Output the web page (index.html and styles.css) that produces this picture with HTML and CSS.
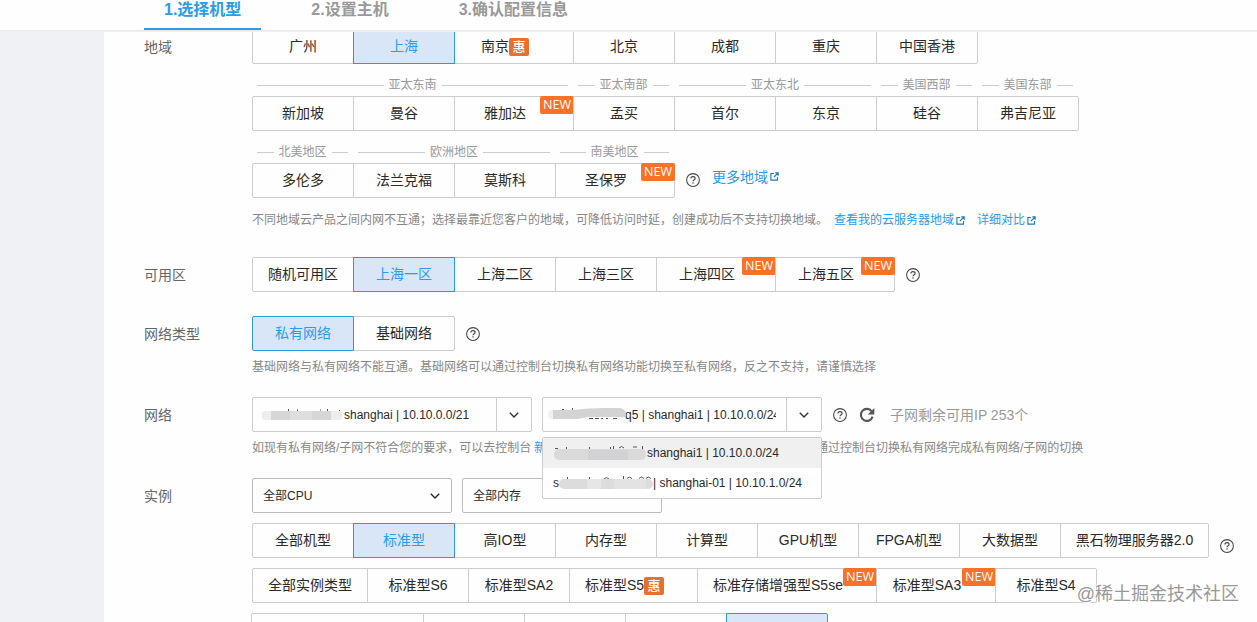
FILE: index.html
```html
<!DOCTYPE html>
<html lang="zh-CN">
<head>
<meta charset="utf-8">
<title>选择机型</title>
<link rel="stylesheet" href="styles.css">
</head>
<body>
<svg class="defs" aria-hidden="true">
  <symbol id="i-help" viewBox="0 0 14 14"><circle cx="7" cy="7" r="6.4" fill="none" stroke="currentColor" stroke-width="1.050"/><path d="M4.900 5.600C4.900 4.300 5.800 3.600 7 3.600s2.100.7 2.100 1.800C9.100 6.700 7 6.800 7 8.300" fill="none" stroke="currentColor" stroke-width="1.150"/><rect x="6.400" y="9.300" width="1.200" height="1.300" fill="currentColor"/></symbol>
  <symbol id="i-ext" viewBox="0 0 9 9"><path d="M4 1.500H.9v6.600h6.600V5M5.300.9h2.900v2.900M8 1L3.900 5.100" fill="none" stroke="currentColor" stroke-width="1.100"/></symbol>
  <symbol id="i-down" viewBox="0 0 10 6"><path d="M.8.8L5 5 9.200.8" fill="none" stroke="currentColor" stroke-width="1.400"/></symbol>
  <symbol id="i-refresh" viewBox="0 0 16 16"><path d="M12.700 4.300A6 6 0 1 0 13.600 9.600" fill="none" stroke="currentColor" stroke-width="2.100"/><path d="M15.300.9v6.500H8.800z" fill="currentColor"/></symbol>
</svg>
<header class="steps">
  <div class="step active">1.选择机型</div>
  <div class="step">2.设置主机</div>
  <div class="step">3.确认配置信息</div>
</header>
<div class="page">
  <aside class="side"></aside>
  <main class="form">
    <section class="field">
      <div class="label">地域</div>
      <div class="body">
        <div class="opts"><div class="opt">广州</div><div class="opt on">上海</div><div class="opt tagged">南京<b class="hui">惠</b></div><div class="opt">北京</div><div class="opt">成都</div><div class="opt">重庆</div><div class="opt">中国香港</div></div>
        <div class="heads"><div class="head span3t">亚太东南</div><div class="head">亚太南部</div><div class="head span2">亚太东北</div><div class="head">美国西部</div><div class="head">美国东部</div></div>
        <div class="opts"><div class="opt">新加坡</div><div class="opt">曼谷</div><div class="opt tagged">雅加达<b class="new">NEW</b></div><div class="opt">孟买</div><div class="opt">首尔</div><div class="opt">东京</div><div class="opt">硅谷</div><div class="opt">弗吉尼亚</div></div>
        <div class="heads"><div class="head">北美地区</div><div class="head span2">欧洲地区</div><div class="head span1t">南美地区</div></div>
        <div class="line">
          <div class="opts"><div class="opt">多伦多</div><div class="opt">法兰克福</div><div class="opt">莫斯科</div><div class="opt tagged">圣保罗<b class="new">NEW</b></div></div>
          <svg class="help up"><use href="#i-help"/></svg>
          <a class="more">更多地域<svg class="ext"><use href="#i-ext"/></svg></a>
        </div>
        <div class="hint far"><span>不同地域云产品之间内网不互通；选择最靠近您客户的地域，可降低访问时延，创建成功后不支持切换地域。</span><a>查看我的云服务器地域<svg class="ext"><use href="#i-ext"/></svg></a><a class="second">详细对比<svg class="ext"><use href="#i-ext"/></svg></a></div>
      </div>
    </section>
    <section class="field zone">
      <div class="label">可用区</div>
      <div class="body line">
        <div class="opts"><div class="opt">随机可用区</div><div class="opt on">上海一区</div><div class="opt">上海二区</div><div class="opt">上海三区</div><div class="opt tagged">上海四区<b class="new">NEW</b></div><div class="opt tagged">上海五区<b class="new">NEW</b></div></div>
        <svg class="help"><use href="#i-help"/></svg>
      </div>
    </section>
    <section class="field nettype">
      <div class="label">网络类型</div>
      <div class="body">
        <div class="line">
          <div class="opts"><div class="opt on">私有网络</div><div class="opt">基础网络</div></div>
          <svg class="help"><use href="#i-help"/></svg>
        </div>
        <div class="hint"><span>基础网络与私有网络不能互通。基础网络可以通过控制台切换私有网络功能切换至私有网络，反之不支持，请谨慎选择</span></div>
      </div>
    </section>
    <section class="field net">
      <div class="label">网络</div>
      <div class="body">
        <div class="line">
          <div class="combo">
            <div class="value"><svg class="mask vpc" viewBox="0 0 84 16"><path d="M26.500 2v3M35.500 2.500v2M58 3h1M65.500 2v3M77.500 3v3" stroke="#555" fill="none"/><rect x="0" y="4" width="80" height="9" rx="3" fill="#ededed"/><rect x="9" y="4" width="60" height="9" fill="#d6d6d8"/><rect x="28" y="4" width="22" height="9" fill="#dededf"/></svg><span>shanghai | 10.10.0.0/21</span></div>
            <div class="arrow"><svg><use href="#i-down"/></svg></div>
          </div>
          <div class="combo second">
            <div class="value"><span class="text">q5 | shanghai1 | 10.10.0.0/24</span><svg class="mask subnet" viewBox="0 0 84 18"><path d="M14 4.500h2M24.500 3v3M41 13.500h4M47 13.500h4M53 13.500h2M58 13.500h2M65 13.500h4" stroke="#555" fill="none"/><rect x="0" y="5" width="14" height="9" rx="4" fill="#f0f0f0"/><path d="M5 5h20Q40 3 57 3h15q5 1 6 5v3q-2 2-6 1H40L30 14H5z" fill="#d3d3d4"/></svg></div>
            <div class="arrow"><svg><use href="#i-down"/></svg></div>
            <div class="menu">
              <div class="item hover"><svg class="mask m1" viewBox="0 0 96 16"><path d="M2 3.500h3M13.500 2v3M36.500 2v3M57.500 2v3M60.500 1v4M66 3q2.500-3 5 0M80 2h4M89.500 1v4" stroke="#555" fill="none"/><rect x="1" y="4" width="92" height="11" rx="5" fill="#dadadb"/><rect x="35" y="5" width="40" height="10" fill="#d2d2d4"/></svg><span>shanghai1 | 10.10.0.0/24</span></div>
              <div class="item"><span>s</span><svg class="mask m2" viewBox="0 0 98 16"><path d="M8.500 2v3M30.500 2v3M45 4q2-3 5 0M64.500 1v4M68 3.500q2-3 5 0M80 3.500q2-3 5 0M87 3.500q2-3 5 0" stroke="#555" fill="none"/><rect x="0" y="4" width="94" height="10" rx="5" fill="#dcdcdd"/><rect x="28" y="4" width="14" height="10" fill="#e6e6e8"/><rect x="55" y="4" width="32" height="10" fill="#e3e3e5"/></svg><span>| shanghai-01 | 10.10.1.0/24</span></div>
            </div>
          </div>
          <svg class="help"><use href="#i-help"/></svg>
          <svg class="refresh"><use href="#i-refresh"/></svg>
          <span class="remain">子网剩余可用IP 253个</span>
        </div>
        <div class="hint"><span class="lead">如现有私有网络/子网不符合您的要求，可以去控制台</span><a class="create">新建</a><span>通过控制台切换私有网络完成私有网络/子网的切换</span></div>
      </div>
    </section>
    <section class="field inst">
      <div class="label">实例</div>
      <div class="body stack">
        <div class="line">
          <div class="select">全部CPU<svg><use href="#i-down"/></svg></div>
          <div class="select second">全部内存<svg><use href="#i-down"/></svg></div>
        </div>
        <div class="line">
          <div class="opts"><div class="opt">全部机型</div><div class="opt on">标准型</div><div class="opt">高IO型</div><div class="opt">内存型</div><div class="opt">计算型</div><div class="opt">GPU机型</div><div class="opt">FPGA机型</div><div class="opt">大数据型</div><div class="opt w149">黑石物理服务器2.0</div></div>
          <svg class="help low"><use href="#i-help"/></svg>
        </div>
        <div class="opts"><div class="opt w116">全部实例类型</div><div class="opt">标准型S6</div><div class="opt">标准型SA2</div><div class="opt tagged w129">标准型S5<b class="hui">惠</b></div><div class="opt tagged w180">标准存储增强型S5se<b class="new">NEW</b></div><div class="opt tagged">标准型SA3<b class="new">NEW</b></div><div class="opt">标准型S4</div></div>
        <div class="opts last"><div class="opt w173"></div><div class="opt"></div><div class="opt"></div><div class="opt"></div><div class="opt on"></div></div>
      </div>
    </section>
  </main>
</div>
<div class="watermark">@稀土掘金技术社区</div>
</body>
</html>
```

FILE: styles.css
```css
* { box-sizing: border-box; }
body {
  margin: 0;
  height: 622px;
  overflow: hidden;
  position: relative;
  background: #fefefe;
  color: #2a2a2a;
  font: 14px/20px "Liberation Sans", "Noto Sans CJK SC", sans-serif;
  white-space: nowrap;
}
.defs { display: none; }
svg { display: block; flex: none; }
a { color: #2b9bea; }

.steps {
  display: flex;
  gap: 30px;
  height: 30px;
  padding-left: 144px;
  background: #fefefe;
  position: relative;
  z-index: 2;
  box-shadow: 0 1px 0 #e7e8ea, 0 2px 0 #eff0f1;
}
.step { padding: 0 20px; height: 30px; line-height: 19px; font-size: 16px; font-weight: bold; color: #999; }
.step.active { color: #2b9bea; border-bottom: 2px solid #2b9bea; }

.page { display: flex; height: 593px; margin-top: -1px; }
.side { width: 104px; background: #f0f1f5; flex: none; }
.form { padding-left: 40px; flex: 1; min-width: 0; }
.field { display: flex; }
.zone { margin-top: 28px; }
.nettype { margin-top: 24px; }
.net, .inst { margin-top: 21px; }
.label { width: 108px; flex: none; line-height: 36px; height: 35px; color: #666; }
.line { display: flex; align-items: center; }
.stack { display: flex; flex-direction: column; gap: 10px; }

.opts { display: flex; }
.opt {
  width: 102px;
  height: 35px;
  padding-bottom: 2px;
  border: 1px solid #ccc;
  display: flex;
  align-items: center;
  justify-content: center;
  position: relative;
  flex: none;
}
.opt + .opt { margin-left: -1px; }
.opt:first-child { border-radius: 2px 0 0 2px; }
.opt:last-child { border-radius: 0 2px 2px 0; }
.opt.on { background: #d8e6f7; border-color: #2b9bd9; color: #2b9bf0; z-index: 1; }
.opt.tagged { width: 120px; padding-right: 18px; }
.opt.w116 { width: 116px; }
.opt.w149 { width: 149px; }
.opt.w173 { width: 173px; }
.opt.w129 { width: 129px; }
.opt.w180 { width: 180px; }
.last { margin-left: -1px; }
.new {
  position: absolute;
  top: -1px;
  right: -1px;
  width: 34px;
  height: 18px;
  border-radius: 2px;
  background: #fb7226;
  color: #fff;
  font: 12.6px/18px "Open Sans", "Noto Sans", sans-serif;
  text-align: center;
}
.hui {
  width: 20px;
  height: 18px;
  margin: 2px 0 0;
  border-radius: 2px;
  background: #e8702f;
  color: #fff;
  font-size: 13px;
  font-weight: 500;
  line-height: 17px;
  text-align: center;
}

.heads { display: flex; height: 32px; padding: 9px 0 0 5px; gap: 10px; }
.head { width: 91px; height: 23px; display: flex; align-items: center; gap: 5px; font-size: 12px; color: #999; }
.head::before, .head::after { content: ""; flex: 1; height: 1px; margin-top: 1px; background: #ccc; }
.span3t { width: 311px; }
.span2 { width: 192px; }
.span1t { width: 109px; }

.help { width: 14px; height: 14px; margin: 1px 0 0 11px; color: #444; }
.help.up { margin-top: -1px; }
.help.low { margin-top: 11px; }
.more { display: flex; align-items: center; margin: -8px 0 0 12px; }
.ext { width: 9px; height: 9px; margin-left: 2px; color: #1b79bd; }
.hint { display: flex; height: 19px; line-height: 21px; margin-top: 6px; font-size: 12px; color: #888; }
.hint.far { margin-top: 12px; }
.hint a { display: flex; height: 21px; align-items: center; margin-left: 6px; }
.hint a.second { margin-left: 12px; }
.hint a.create { margin-left: 0; width: 282px; }
.hint .lead { width: 282px; flex: none; }

.combo { display: flex; width: 280px; height: 35px; border: 1px solid #ccc; border-radius: 2px; position: relative; }
.combo.second { margin-left: 10px; }
.value { width: 243px; padding-left: 9px; display: flex; align-items: center; font-size: 12px; overflow: hidden; }
.combo.second .value { width: 233px; margin-right: 10px; padding-left: 82px; }
.arrow { flex: 1; border-left: 1px solid #ccc; display: flex; align-items: center; justify-content: center; color: #333; }
.arrow svg { width: 10px; height: 6px; }
.mask { height: 16px; }
.mask.vpc { width: 84px; margin-right: -2px; }
.mask.subnet { position: absolute; left: 5px; top: 7px; width: 84px; height: 18px; }
.mask.m1 { width: 96px; margin-right: -2px; }
.mask.m2 { width: 98px; margin-right: -4px; }
.menu {
  position: absolute;
  top: 39px;
  left: -1px;
  width: 280px;
  height: 62px;
  border: 1px solid #ccc;
  border-radius: 2px;
  background: #fff;
  z-index: 5;
}
.item { height: 30px; padding-left: 10px; display: flex; align-items: center; font-size: 12px; }
.item.hover { background: #f0f0f0; }
.refresh { width: 16px; height: 16px; margin-left: 12px; color: #555; }
.remain { margin-left: 15px; color: #999; }

.select {
  width: 200px;
  height: 35px;
  border: 1px solid #bbb;
  border-radius: 2px;
  padding: 0 11px 0 10px;
  display: flex;
  align-items: center;
  justify-content: space-between;
  font-size: 12px;
}
.select.second { margin-left: 10px; }
.select svg { width: 10px; height: 6px; }
.watermark {
  position: absolute;
  z-index: 6;
  right: 18px;
  top: 581px;
  font-size: 18px;
  line-height: 26px;
  color: #999;
  text-shadow: 1px 1px 0 #fff, -1px -1px 0 #fff;
}
```
